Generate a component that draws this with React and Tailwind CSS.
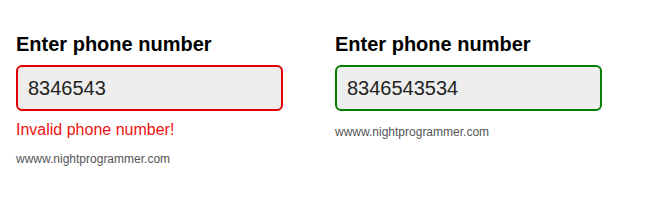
const site = 'wwww.nightprogrammer.com';

function PhoneField({ value, valid }) {
  return (
    <div className="w-[267px] flex flex-col">
      <h2 className="text-[20px] leading-[24px] font-bold text-black">Enter phone number</h2>
      <input
        readOnly
        value={value}
        className={`mt-[9px] h-[46px] w-full rounded-[6px] border-2 bg-[#eeeeee] px-[10px] text-[20px] text-[#222] outline-none ${
          valid ? 'border-[#008000]' : 'border-[#e00000]'
        }`}
      />
      {!valid && (
        <p className="mt-[9px] text-[16px] leading-[20px] text-[#ee1111]">Invalid phone number!</p>
      )}
      <p className={`${valid ? 'mt-[13px]' : 'mt-[11px]'} text-[12px] leading-[16px] text-[#555]`}>{site}</p>
    </div>
  );
}

export default function App() {
  return (
    <div
      className="w-[650px] h-[200px] bg-white flex gap-[52px] pl-[16px] pt-[32px]"
      style={{ fontFamily: '"Liberation Sans", Arial, sans-serif' }}
    >
      <PhoneField value="8346543" valid={false} />
      <PhoneField value="8346543534" valid={true} />
    </div>
  );
}
